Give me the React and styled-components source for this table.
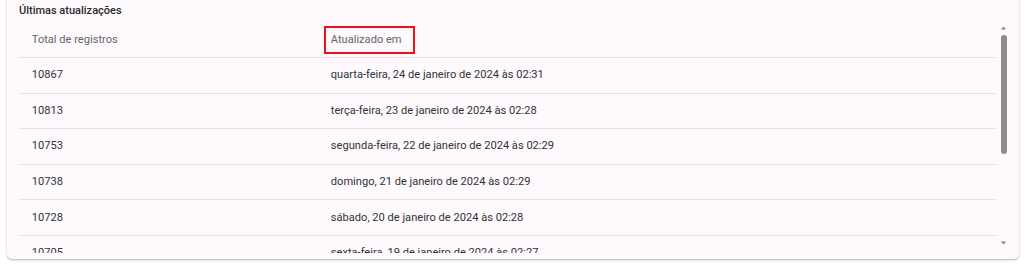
import React from "react";
import styled, { createGlobalStyle } from "styled-components";

const GlobalStyle = createGlobalStyle`
  body {
    margin: 0;
    background: #ffffff;
    font-family: Roboto, "Liberation Sans", Arial, sans-serif;
  }
`;

const rows = [
  { total: "10867", date: "quarta-feira, 24 de janeiro de 2024 às 02:31" },
  { total: "10813", date: "terça-feira, 23 de janeiro de 2024 às 02:28" },
  { total: "10753", date: "segunda-feira, 22 de janeiro de 2024 às 02:29" },
  { total: "10738", date: "domingo, 21 de janeiro de 2024 às 02:29" },
  { total: "10728", date: "sábado, 20 de janeiro de 2024 às 02:28" },
  { total: "10705", date: "sexta-feira, 19 de janeiro de 2024 às 02:27" },
];

const App = () => {
  return (
    <Page>
      <GlobalStyle />
      <Card>
        <Title>Últimas atualizações</Title>
        <TableArea>
          <Viewport>
            <HeaderRow>
              <Cell $head>Total de registros</Cell>
              <Cell $head>
                <Highlight>Atualizado em</Highlight>
              </Cell>
            </HeaderRow>
            {rows.map((r) => (
              <Row key={r.total}>
                <Cell>{r.total}</Cell>
                <Cell>{r.date}</Cell>
              </Row>
            ))}
          </Viewport>
          <ScrollTrack>
            <Arrow viewBox="0 0 8 5" $up>
              <path d="M4 0.5 L7.5 4.5 L0.5 4.5 Z" fill="#8a8a8a" />
            </Arrow>
            <Thumb />
            <Spacer />
            <Arrow viewBox="0 0 8 5">
              <path d="M0.5 0.5 L7.5 0.5 L4 4.5 Z" fill="#8a8a8a" />
            </Arrow>
          </ScrollTrack>
        </TableArea>
      </Card>
    </Page>
  );
};

export default App;

const Page = styled.div`
  padding: 0 5px 10px 7px;
`;

const Card = styled.section`
  margin-top: -6px;
  padding: 6px 8px 6px 12px;
  background: #fdf9fd;
  border-radius: 5px;
  box-shadow: 0 1px 3px rgba(0, 0, 0, 0.2), 0 1px 1px rgba(0, 0, 0, 0.12);
`;

const Title = styled.div`
  height: 22px;
  box-sizing: border-box;
  padding-top: 3px;
  font-size: 11px;
  font-weight: 500;
  line-height: 16px;
  color: #2a2a2a;
`;

const TableArea = styled.div`
  display: flex;
  height: 231px;
`;

const Viewport = styled.div`
  flex: 1;
  overflow: hidden;
`;

const HeaderRow = styled.div`
  display: grid;
  grid-template-columns: 299px 1fr;
  align-items: center;
  height: 36px;
  box-sizing: border-box;
  border-bottom: 1px solid #e4e1e4;
`;

const Row = styled(HeaderRow)`
  height: 35.6px;
`;

const Cell = styled.div`
  padding: 0 12.8px;
  font-size: 11.1px;
  line-height: 16px;
  color: ${(p) => (p.$head ? "#666666" : "#333333")};
  white-space: nowrap;
`;

const Highlight = styled.span`
  display: inline-block;
  margin-left: -7px;
  padding: 4px 11px 4px 5px;
  border: 2px solid #e8141b;
`;

const ScrollTrack = styled.div`
  width: 15px;
  display: flex;
  flex-direction: column;
  align-items: center;
`;

const Arrow = styled.svg`
  width: 7px;
  height: 4px;
  flex-shrink: 0;
  margin: ${(p) => (p.$up ? "4px 0 5px" : "0 0 8px")};
`;

const Thumb = styled.div`
  width: 6px;
  height: 119px;
  border-radius: 3px;
  background: #8c8c8c;
`;

const Spacer = styled.div`
  flex: 1;
`;
